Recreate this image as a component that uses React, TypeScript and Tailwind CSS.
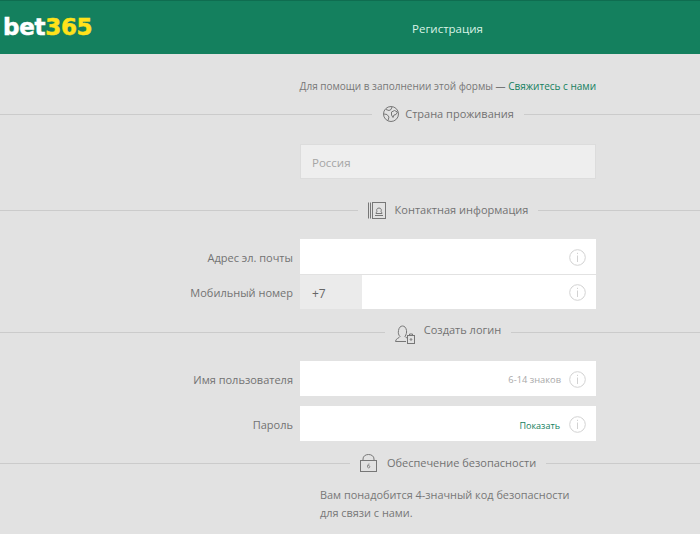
import React from 'react';

const GlobeIcon = () => (
  <svg width="18" height="18" viewBox="0 0 18 18" fill="none" stroke="#777" strokeWidth="1">
    <circle cx="9" cy="9" r="7.5" />
    <path d="M4 4.5l3 1 2-1 1-2.5M2 9l3 .5 2 2.5-1 3.5M9.5 7l3-1.5 3 1.5-1.5 2.5-2 .5-1 2.5-1.5-2.5z" />
  </svg>
);

const ContactIcon = () => (
  <svg width="18" height="17" viewBox="0 0 18 17" fill="none" stroke="#777" strokeWidth="1">
    <path d="M.5.5v16M2.5.5v16" />
    <rect x="4.5" y=".5" width="13" height="16" />
    <path d="M8 11.5c0-1.2.8-1.6 1-2.2-.6-.8-.6-3.3 2-3.3s2.6 2.5 2 3.300c.2.600 1 1 1 2.200z" />
    <path d="M7 13.500h8" />
  </svg>
);

const LoginIcon = () => (
  <svg width="20" height="19" viewBox="0 0 20 19" fill="none" stroke="#777" strokeWidth="1" className="mt-[4px]">
    <path d="M.5 16.500c0-3 4-3.500 4.500-5-1.500-1.500-2-3.500-1.500-6C4 2.500 5.500 1 7.500 1s3.500 1.500 4 4.500c.3 2-.2 4-1.500 6 .3.500 1 1 2 1.500M.5 16.500H11" />
    <rect x="12.500" y="10.500" width="7" height="8" />
    <path d="M14.500 10.500V9h3v1.500" />
    <circle cx="16" cy="14.500" r=".8" />
  </svg>
);

const LockIcon = () => (
  <svg width="17" height="18" viewBox="0 0 17 18" fill="none" stroke="#777" strokeWidth="1">
    <rect x=".5" y="6.500" width="16" height="11" />
    <path d="M3 6.500V5c0-2.800 2.500-4.500 5.500-4.500S14 2.200 14 5v1.500" />
    <path d="M9.500 10c-1.500 0-2 1-2 2.200 0 1 .5 1.800 1.200 1.800s1.100-.6 1.100-1.300-.5-1.200-1.100-1.200-1.200.400-1.200 1" strokeWidth=".8" />
  </svg>
);

const InfoIcon = () => (
  <svg width="17" height="17" viewBox="0 0 17 17" fill="none" stroke="#d2d2d2" strokeWidth="1" className="shrink-0 mt-[1px]">
    <circle cx="8.500" cy="8.500" r="7.800" />
    <path d="M8.500 3.800v1.200M8.500 6.500v6.500" />
  </svg>
);

const SectionHeading = ({ icon, title, gap, titleClass }: { icon: React.ReactNode; title: string; gap: string; titleClass?: string }) => (
  <div className="flex items-center h-5">
    <div className="w-[196px] shrink-0 h-px bg-[#cbcbcb]"></div>
    <div className="flex-1 h-px bg-[#cbcbcb]"></div>
    <div className={`flex items-center px-[10px] ${gap} text-[11px] text-[#727272]`}>
      {icon}
      <span className={titleClass}>{title}</span>
    </div>
    <div className="flex-1 h-px bg-[#cbcbcb]"></div>
  </div>
);

const Field = ({ label, children }: { label: string; children?: React.ReactNode }) => (
  <div className="flex items-center h-[35px]">
    <div className="w-[293px] shrink-0 pt-[3px] text-right text-[11px] text-[#727272]">{label}</div>
    <div className="ml-[7px] w-[296px] h-full bg-white flex items-center justify-end pr-[10px]">
      {children}
      <InfoIcon />
    </div>
  </div>
);

export default function App() {
  return (
    <div className="w-[700px] h-[534px] overflow-hidden bg-[#e2e2e2] font-['Open_Sans',sans-serif]">
      {/* Header */}
      <div className="h-[54px] bg-[#14805e] border-t border-[#0f6d50] flex items-center relative">
        <div className="pl-[3px] font-['DejaVu_Sans',sans-serif] font-bold text-[23px] tracking-[-0.3px] leading-none text-white [-webkit-text-stroke:0.5px]">
          bet<span className="text-[#ffe21a]">365</span>
        </div>
        <div className="absolute left-[412px] top-[19px] text-[11.500px] text-[#d9f3e6]">Регистрация</div>
      </div>

      <div className="pt-[24px] pr-[104px] text-right text-[10px] leading-4 text-[#777]">
        Для помощи в заполнении этой формы — <span className="text-[#14805e]">Свяжитесь с нами</span>
      </div>

      <div className="mt-[10px]">
        <SectionHeading icon={<GlobeIcon />} title="Страна проживания" gap="gap-[5px]" />
      </div>

      <div className="mt-[20px] ml-[300px] w-[296px] h-[35px] bg-[#eeeeee] border border-[#dcdcdc] flex items-center pl-[11px] pt-[2px] text-[11.500px] text-[#a5a5a5]">
        Россия
      </div>

      <div className="mt-[21px]">
        <SectionHeading icon={<ContactIcon />} title="Контактная информация" gap="gap-[9px]" />
      </div>

      <div className="mt-[19px] flex flex-col gap-px">
        <Field label="Адрес эл. почты" />
        <div className="flex items-center h-[34px]">
          <div className="w-[293px] shrink-0 pt-[3px] text-right text-[11px] text-[#727272]">Мобильный номер</div>
          <div className="ml-[7px] w-[296px] h-full bg-white flex items-center pr-[10px]">
            <div className="w-[62px] h-full bg-[#ebebeb] flex items-center pl-[12px] pt-[3px] text-[12px] text-[#666]">+7</div>
            <div className="flex-1"></div>
            <InfoIcon />
          </div>
        </div>
      </div>

      <div className="mt-[13px]">
        <SectionHeading icon={<LoginIcon />} title="Создать логин" gap="gap-[9px]" titleClass="mb-[3px]" />
      </div>

      <div className="mt-[19px] flex flex-col gap-[10px]">
        <Field label="Имя пользователя">
          <span className="mr-[8px] pt-[3px] text-[9.300px] text-[#a8a8a8]">6-14 знаков</span>
        </Field>
        <Field label="Пароль">
          <span className="mr-[9px] pt-[5px] text-[9px] text-[#14805e]">Показать</span>
        </Field>
      </div>

      <div className="mt-[12px]">
        <SectionHeading icon={<LockIcon />} title="Обеспечение безопасности" gap="gap-[10px]" />
      </div>

      <div className="mt-[13px] ml-[320px] w-[260px] text-[10.900px] leading-[18px] text-[#777]">
        Вам понадобится 4-значный код безопасности для связи с нами.
      </div>
    </div>
  );
}
